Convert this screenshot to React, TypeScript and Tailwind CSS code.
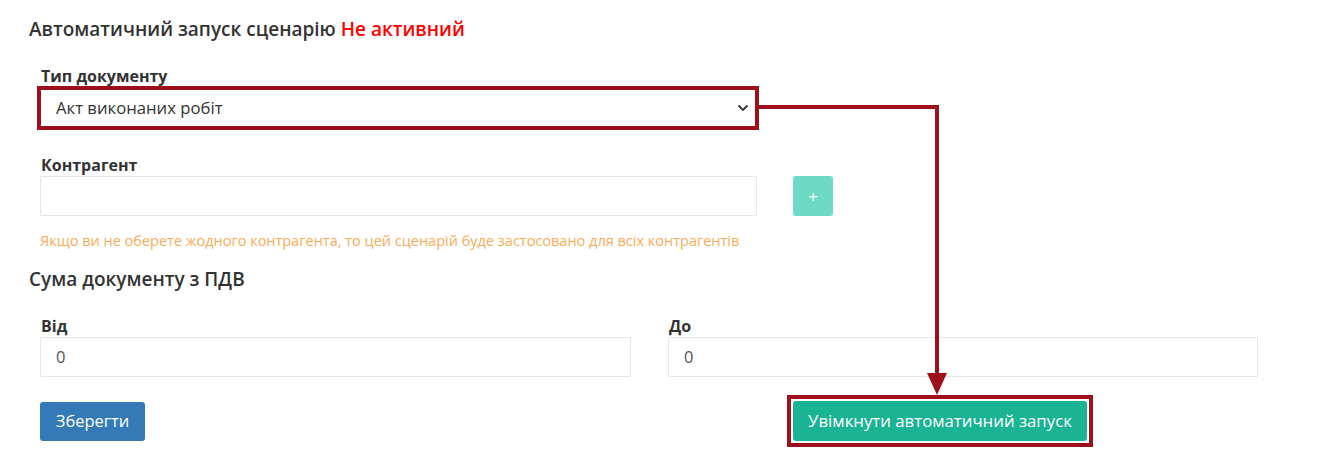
const RED = "#9e0f1c";

function Chevron() {
  return (
    <svg width="12" height="8" viewBox="0 0 12 8" className="shrink-0">
      <path d="M1.5 1.5 L6 6 L10.5 1.5" fill="none" stroke="#333" strokeWidth="1.8" />
    </svg>
  );
}

export default function App() {
  return (
    <div
      className="relative w-[1319px] h-[461px] bg-white overflow-hidden"
      style={{ fontFamily: '"Open Sans", "Noto Sans", sans-serif' }}
    >
      <div className="pl-[29px] pt-[17px]">
        {/* Заголовок */}
        <h3 className="text-[19px] leading-[24px] font-semibold text-[#333]">
          Автоматичний запуск сценарію <span className="text-[#ff0000]">Не активний</span>
        </h3>

        {/* Тип документу */}
        <label className="block mt-[25px] ml-[12px] text-[16px] leading-[20px] font-bold text-[#333]">
          Тип документу
        </label>
        <div className="ml-[8px] w-[722px] h-[44px] border-4 border-[#9e0f1c]">
          <div className="h-full flex items-center justify-between pl-[15px] pr-[6px] text-[16.7px] text-[#333]">
            <span>Акт виконаних робіт</span>
            <Chevron />
          </div>
        </div>

        {/* Контрагент */}
        <label className="block mt-[25px] ml-[12px] text-[16px] leading-[20px] font-bold text-[#333]">
          Контрагент
        </label>
        <div className="mt-[1px] ml-[11px] flex items-center gap-[36px]">
          <div className="w-[717px] h-[40px] border border-[#e5e6e7] rounded-[1px] bg-white" />
          <button className="w-[40px] h-[40px] rounded-[3px] bg-[#6ddac3] text-white text-[17px] leading-none">
            +
          </button>
        </div>
        <p className="mt-[16px] ml-[11px] text-[14.5px] leading-[18px] text-[#f8ac59]">
          Якщо ви не оберете жодного контрагента, то цей сценарій буде застосовано для всіх контрагентів
        </p>

        {/* Сума документу */}
        <h3 className="mt-[17px] text-[19px] leading-[24px] font-semibold text-[#333]">Сума документу з ПДВ</h3>
        <div className="mt-[25px] ml-[11px] flex gap-[37px]">
          <div className="w-[591px]">
            <label className="block ml-[1px] text-[16px] leading-[20px] font-bold text-[#333]">Від</label>
            <div className="mt-[1px] h-[40px] border border-[#e5e6e7] rounded-[1px] flex items-center pl-[15px] text-[16.5px] text-[#555]">
              0
            </div>
          </div>
          <div className="w-[590px]">
            <label className="block ml-[1px] text-[16px] leading-[20px] font-bold text-[#333]">До</label>
            <div className="mt-[1px] h-[40px] border border-[#e5e6e7] rounded-[1px] flex items-center pl-[15px] text-[16.5px] text-[#555]">
              0
            </div>
          </div>
        </div>

        {/* Кнопки */}
        <div className="mt-[18px] ml-[11px] flex items-center">
          <button className="w-[105px] h-[39px] rounded-[3px] bg-[#337ab7] text-white text-[16.5px]">Зберегти</button>
          <div className="ml-[642px] border-4 border-[#9e0f1c] p-[2px]">
            <button className="w-[294px] h-[40px] rounded-[3px] bg-[#1ab394] text-white text-[16.8px]">
              Увімкнути автоматичний запуск
            </button>
          </div>
        </div>
      </div>

      {/* Стрілка-анотація */}
      <svg className="absolute left-0 top-0 pointer-events-none" width="1319" height="461">
        <polyline points="758,107 937,107 937,375" fill="none" stroke={RED} strokeWidth="4" />
        <polygon points="927,373 947,373 937,395" fill={RED} />
      </svg>
    </div>
  );
}
